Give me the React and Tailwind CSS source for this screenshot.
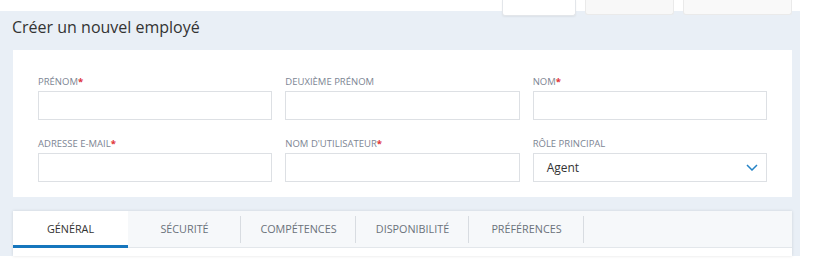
import React from "react";

const fields = [
  { label: "Prénom", required: true },
  { label: "Deuxième prénom" },
  { label: "Nom", required: true },
  { label: "Adresse e-mail", required: true },
  { label: "Nom d'utilisateur", required: true },
  { label: "Rôle principal", select: "Agent" },
];

const tabs = [
  { label: "Général", w: "w-[115px]", active: true },
  { label: "Sécurité", w: "w-[113px]" },
  { label: "Compétences", w: "w-[115px]" },
  { label: "Disponibilité", w: "w-[113px]" },
  { label: "Préférences", w: "w-[115px]" },
];

const Field = ({ label, required, select }) => (
  <div className="flex flex-col">
    <label className="text-[9.5px] leading-[12px] uppercase text-[#7d8593] mb-[3px]">
      {label}
      {required && <span className="text-[#e0323c] font-bold">*</span>}
    </label>
    {select ? (
      <div className="h-[29px] border border-[#dde0e4] bg-white flex items-center justify-between pl-[13px] pr-[8px]">
        <span className="text-[12px] text-[#333]">{select}</span>
        <svg width="12" height="7" viewBox="0 0 12 7" fill="none">
          <polyline points="1,1 6,6 11,1" stroke="#2583c6" strokeWidth="1.5" />
        </svg>
      </div>
    ) : (
      <input className="h-[29px] border border-[#dde0e4] bg-white outline-none" />
    )}
  </div>
);

export default function App() {
  return (
    <div className="relative w-[813px] h-[269px] bg-white font-['Open_Sans',sans-serif] overflow-hidden">
      <div className="absolute top-0 left-[502px] flex gap-[9px]">
        <div className="w-[74px] h-[16px] bg-white border border-t-0 border-[#e3e6ea] rounded-b-[3px] shadow-[0_1px_2px_rgba(0,0,0,0.06)]" />
        <div className="w-[89px] h-[15px] bg-[#f8f8f8] border border-t-0 border-[#eaeaea] rounded-b-[3px]" />
        <div className="w-[109px] h-[15px] bg-[#f9f9f9] border border-t-0 border-[#eaeaea] rounded-b-[3px]" />
      </div>

      <div className="mt-[11px] w-[800px] h-[245px] bg-[#e9eff6]">
        <div className="h-[39px] pl-[12px] pt-[5px]">
          <h1 className="text-[16px] leading-[22px] text-[#333]">Créer un nouvel employé</h1>
        </div>

        <div className="ml-[13px] w-[779px] bg-white px-[25px] pt-[26px] pb-[15px] grid grid-cols-3 gap-x-[13px] gap-y-[18px]">
          {fields.map((f) => (
            <Field key={f.label} {...f} />
          ))}
        </div>

        <div className="ml-[13px] mt-[14px] w-[779px] h-[45px] bg-white shadow-[0_0_3px_rgba(0,0,0,0.12)]">
          <div className="h-[37px] bg-[#f6f8fa] border-b border-[#e3e7eb] flex">
            {tabs.map((t) => (
              <div
                key={t.label}
                className={`${t.w} relative flex items-center justify-center text-[10.8px] uppercase ${
                  t.active ? "bg-white text-[#333] border-b-[3px] border-[#1676bd] h-[37px]" : "text-[#6b727a]"
                }`}
              >
                <span className={t.active ? "mt-[3px]" : ""}>{t.label}</span>
                {!t.active && (
                  <span className="absolute right-0 top-[5px] h-[27px] w-px bg-[#d8dce1]" />
                )}
              </div>
            ))}
          </div>
        </div>
      </div>
    </div>
  );
}
